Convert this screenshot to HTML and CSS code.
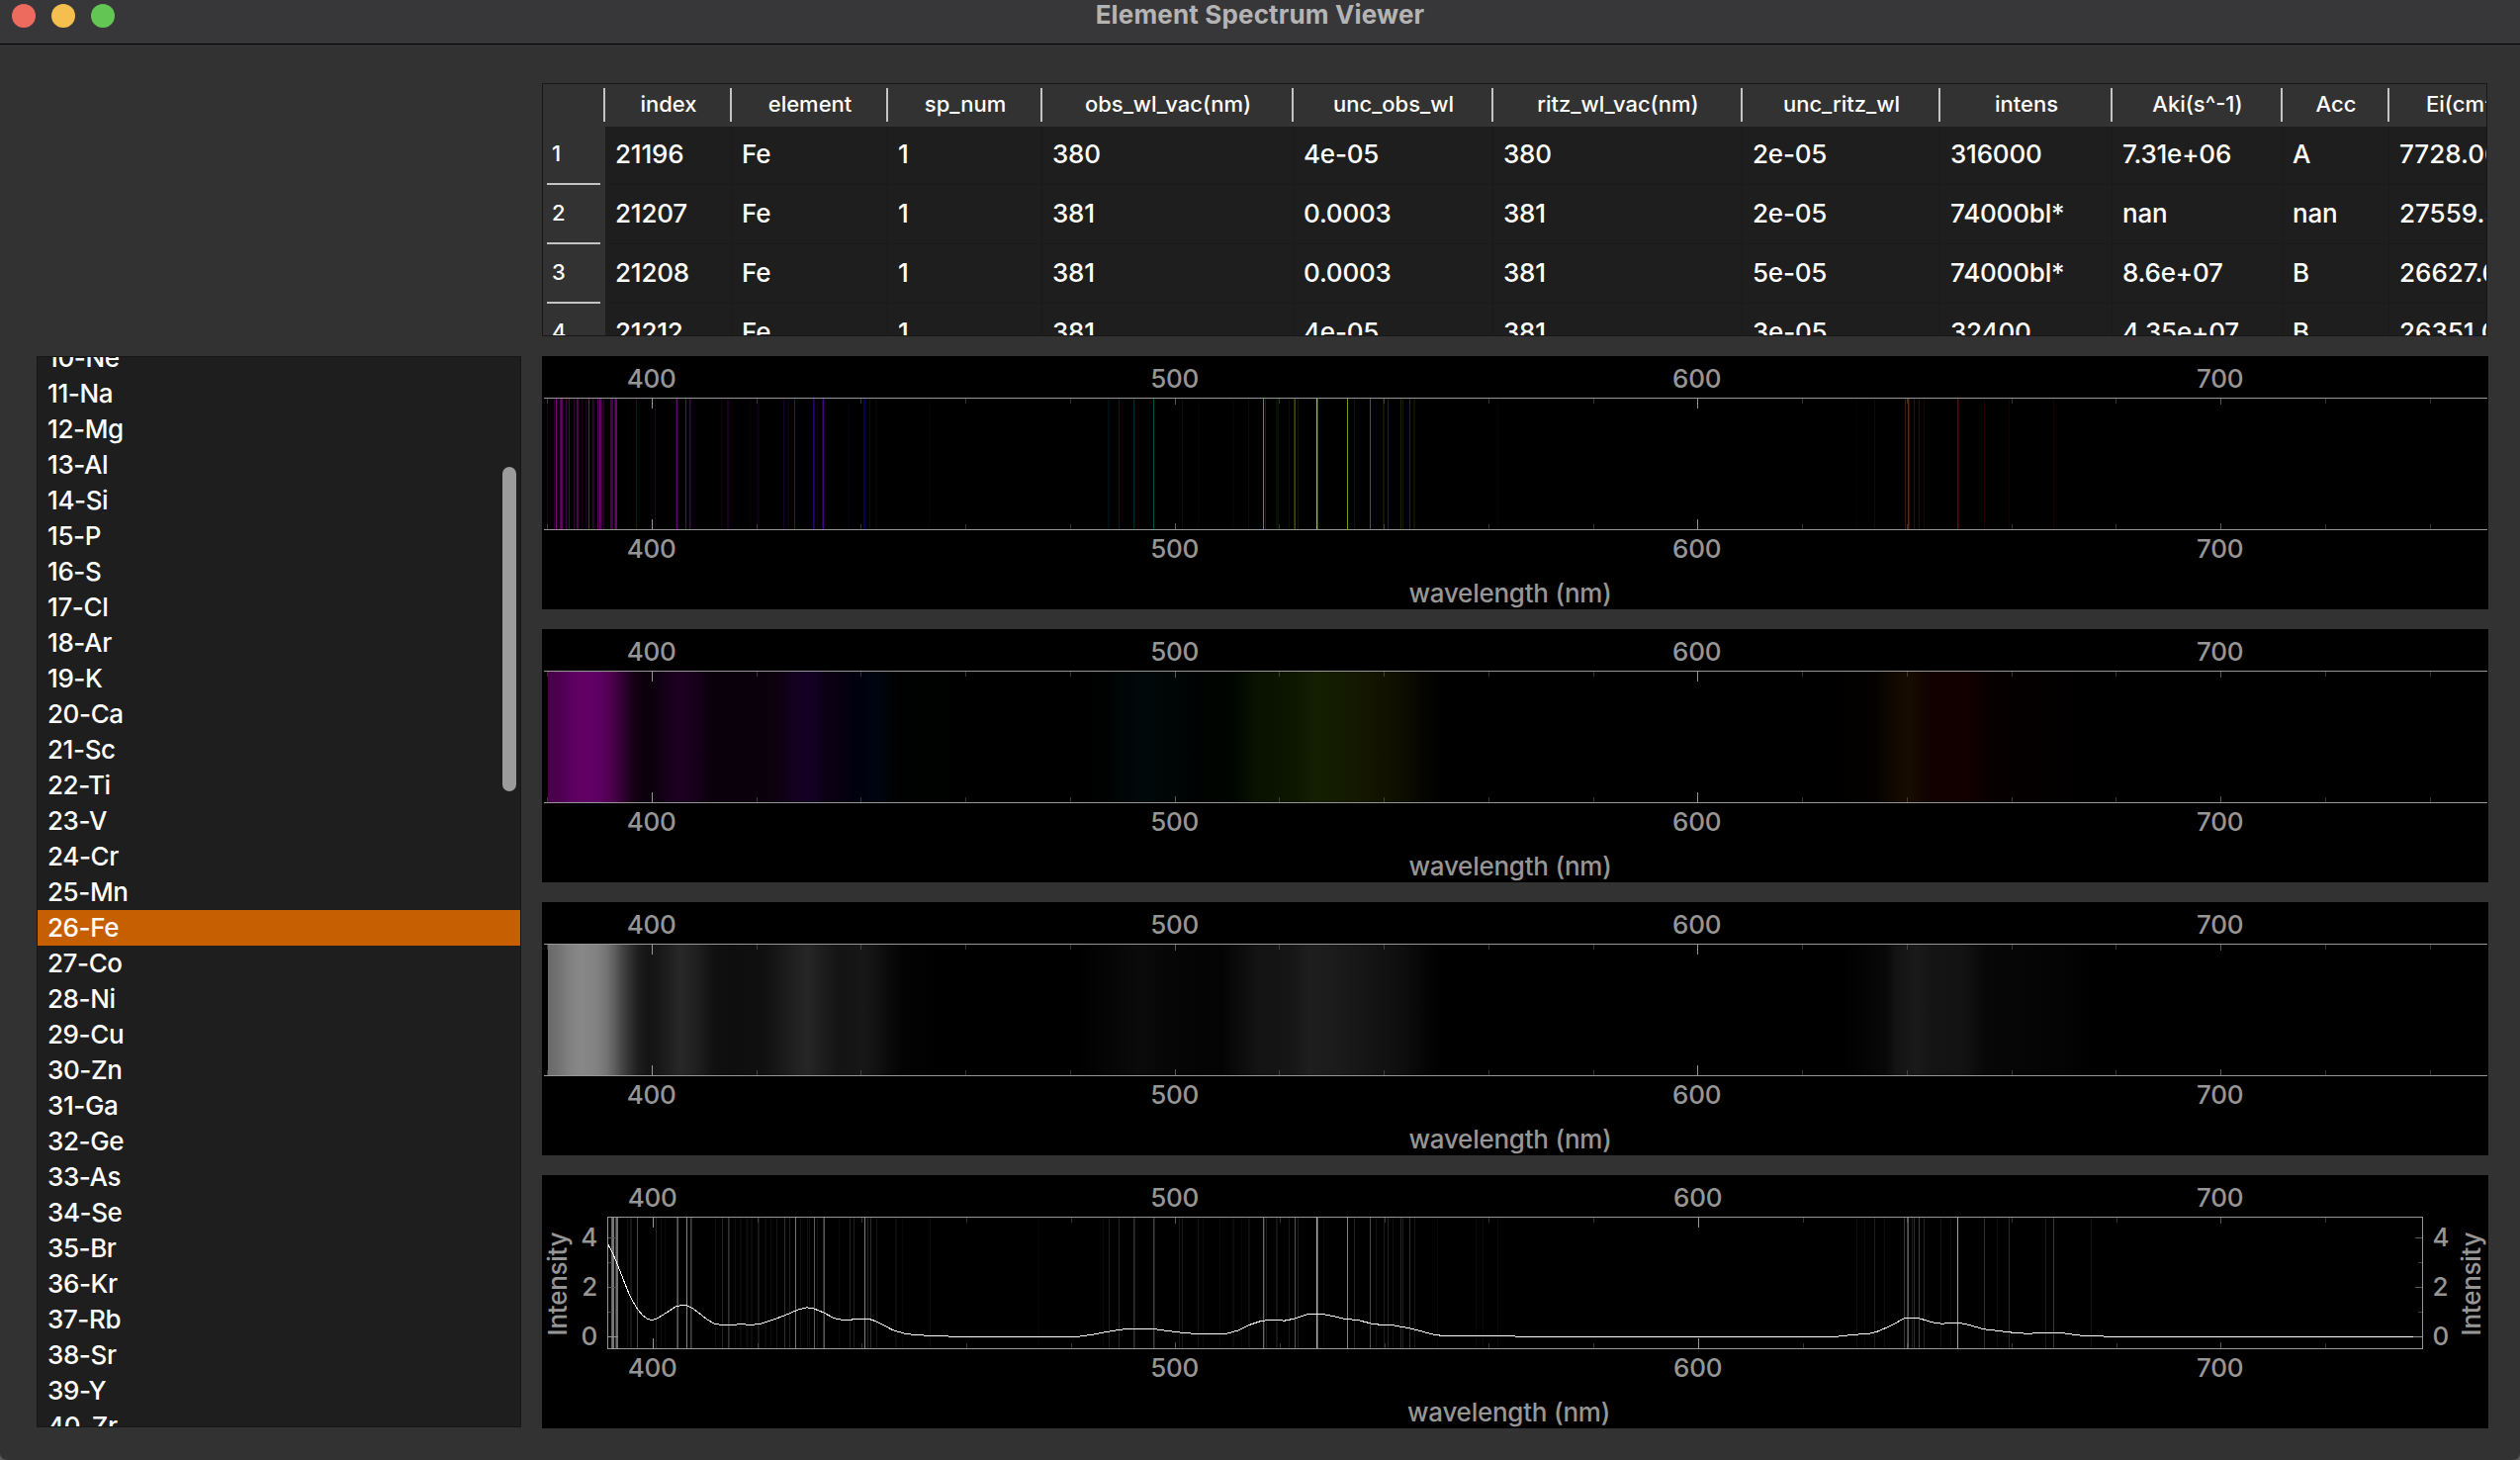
FILE: index.html
```html
<!DOCTYPE html>
<html lang="en">
<head>
<meta charset="utf-8">
<title>Element Spectrum Viewer</title>
<link rel="stylesheet" href="styles.css">
</head>
<body>
<div class="window">
  <header class="titlebar">
    <div class="lights"><i class="light close"></i><i class="light minimize"></i><i class="light zoom"></i></div>
    <h1 class="title">Element Spectrum Viewer</h1>
  </header>
  <main class="content">
    <section class="table">
      <div class="thead">
        <span></span><span>index</span><span>element</span><span>sp_num</span><span>obs_wl_vac(nm)</span><span>unc_obs_wl</span><span>ritz_wl_vac(nm)</span><span>unc_ritz_wl</span><span>intens</span><span>Aki(s^-1)</span><span>Acc</span><span>Ei(cm^-1)</span>
      </div>
      <div class="trow"><b>1</b><span>21196</span><span>Fe</span><span>1</span><span>380</span><span>4e-05</span><span>380</span><span>2e-05</span><span>316000</span><span>7.31e+06</span><span>A</span><span>7728.060</span></div>
      <div class="trow"><b>2</b><span>21207</span><span>Fe</span><span>1</span><span>381</span><span>0.0003</span><span>381</span><span>2e-05</span><span>74000bl*</span><span>nan</span><span>nan</span><span>27559.583</span></div>
      <div class="trow"><b>3</b><span>21208</span><span>Fe</span><span>1</span><span>381</span><span>0.0003</span><span>381</span><span>5e-05</span><span>74000bl*</span><span>8.6e+07</span><span>B</span><span>26627.609</span></div>
      <div class="trow"><b>4</b><span>21212</span><span>Fe</span><span>1</span><span>381</span><span>4e-05</span><span>381</span><span>3e-05</span><span>32400</span><span>4.35e+07</span><span>B</span><span>26351.040</span></div>
    </section>
    <aside class="list">
      <ul>
        <li>10-Ne</li><li>11-Na</li><li>12-Mg</li><li>13-Al</li><li>14-Si</li><li>15-P</li><li>16-S</li><li>17-Cl</li><li>18-Ar</li><li>19-K</li><li>20-Ca</li><li>21-Sc</li><li>22-Ti</li><li>23-V</li><li>24-Cr</li><li>25-Mn</li><li class="selected">26-Fe</li><li>27-Co</li><li>28-Ni</li><li>29-Cu</li><li>30-Zn</li><li>31-Ga</li><li>32-Ge</li><li>33-As</li><li>34-Se</li><li>35-Br</li><li>36-Kr</li><li>37-Rb</li><li>38-Sr</li><li>39-Y</li><li>40-Zr</li>
      </ul>
      <div class="scrollbar"></div>
    </aside>
    <section class="plots">
      <svg class="plot" id="lines" viewBox="548 0 1968 256"></svg>
      <svg class="plot" id="color" viewBox="548 0 1968 256"></svg>
      <svg class="plot" id="gray" viewBox="548 0 1968 256"></svg>
      <svg class="plot" id="intensity" viewBox="548 0 1968 256"></svg>
    </section>
  </main>
</div>
<script src="plots.js"></script>
</body>
</html>
```
FILE: styles.css
```css
* { box-sizing: border-box; }
html, body { margin: 0; height: 100%; }
body {
  background: #5a5a5a;
  color: #fff;
  font-family: Inter, "Liberation Sans", sans-serif;
  font-size: 26px;
  overflow: hidden;
}
.window {
  width: 2548px;
  height: 1476px;
  display: flex;
  flex-direction: column;
  background: #323232;
  border-radius: 0 0 7px 7px;
  overflow: hidden;
}
.titlebar {
  height: 45px;
  flex: none;
  display: grid;
  grid-template-columns: 1fr auto 1fr;
  background: #373739;
  border-bottom: 1px solid #000;
}
.lights { display: flex; gap: 16px; padding: 4px 0 0 12px; }
.light { width: 24px; height: 24px; border-radius: 50%; }
.close { background: #ed6a5e; }
.minimize { background: #f5bf4f; }
.zoom { background: #62c554; }
.title { margin: 0; font-size: 26px; line-height: 30px; font-weight: 700; color: #b4b4b5; letter-spacing: 0.15px; }

.content {
  flex: 1;
  display: grid;
  grid-template-columns: 490px 1968px;
  grid-template-rows: 256px 1084px;
  gap: 20px 21px;
  padding: 39px 32px 32px 37px;
}
.table {
  grid-column: 2;
  width: 1967px;
  background: #1e1e1e;
  border: 1px solid #171717;
  overflow: hidden;
  font-weight: 500;
}
.thead, .trow {
  display: grid;
  width: 2050px;
  grid-template-columns: 63px 128px 158px 156px 254px 202px 252px 200px 174px 172px 108px 183px;
}
.thead {
  height: 43px;
  background: #323232;
  font-size: 22px;
}
.thead span {
  height: 34px;
  margin-top: 4px;
  padding-left: 2px;
  line-height: 33px;
  text-align: center;
  border-right: 2px solid #c4c4c4;
}
.thead span:last-child { text-align: left; padding-left: 37px; }
.trow { height: 60px; line-height: 57px; letter-spacing: -0.2px; }
.trow:nth-child(2) { height: 59px; line-height: 55px; }
.trow span {
  padding-left: 10px;
  border-right: 1px solid #1a1a1a;
  border-bottom: 1px solid #1a1a1a;
}
.trow span:last-child { letter-spacing: 0; }
.trow b {
  background: #323232;
  font-size: 22px;
  font-weight: 500;
  display: flex;
  flex-direction: column;
  justify-content: space-between;
  padding: 0 5px 0 9px;
}
.trow b::after { content: ""; height: 2px; margin-left: -5px; background: #c4c4c4; flex: none; }

.list {
  grid-column: 1;
  position: relative;
  background: #1e1e1e;
  border: 1px solid #161616;
  margin-bottom: 1px;
  overflow: hidden;
}
.list ul { margin: -17px 0 0; padding: 0; list-style: none; font-weight: 500; letter-spacing: -0.4px; }
.list li { height: 36px; line-height: 36px; padding-left: 10px; }
.list .selected { background: #c65f02; }
.scrollbar { position: absolute; right: 4px; top: 111px; width: 14px; height: 328px; border-radius: 7px; background: #9b9b9b; }

.plots { display: flex; flex-direction: column; gap: 20px; }
.plot { width: 1968px; height: 256px; background: #000; display: block; }
.plot text { fill: #969696; font-size: 26px; font-weight: 450; letter-spacing: -0.25px; }
```
FILE: plots.js
```js
const NS = 'http://www.w3.org/2000/svg';
const AXIS = '#969696';

function add(parent, name, attrs, text) {
  const el = document.createElementNS(NS, name);
  for (const key in attrs) el.setAttribute(key, attrs[key]);
  if (text) el.textContent = text;
  parent.appendChild(el);
  return el;
}
function rect(svg, x, y, width, height, fill) {
  add(svg, 'rect', { x, y, width, height, fill, 'shape-rendering': 'crispEdges' });
}

// [x, colour, width]
const COLOR_LINES = [
  [553,'#1c001c'],[556,'#0c000c'],[560,'#2c002c'],[562,'#7a007c'],[566,'#48004a'],[567,'#6c006e'],[568,'#5c005e'],[572,'#3c003e'],[575,'#58005c'],
  [580,'#300032'],[583,'#5a005e'],[584,'#48004a'],[588,'#180018'],[592,'#200020'],[595,'#8e0094'],[599,'#3a003c'],[600,'#240024'],[604,'#580058'],[606,'#70006f'],[607,'#4c004c'],[608,'#380038'],[610,'#220022'],
  [617,'#480048',3],[621,'#3c003c'],[622,'#6a006e',2],[636,'#080008'],[643,'#340036'],[658,'#0a000c'],[662,'#1e0020'],
  [683,'#280030'],[684,'#620074'],[693,'#66007e'],[697,'#48005c'],[698,'#180020'],[729,'#140018'],[735,'#1c0022',2],[758,'#080009',2],[765,'#0c0010',3],
  [792,'#1c002c'],[797,'#0e001c'],[803,'#480084'],[818,'#06000c'],[822,'#340068'],[823,'#200040'],[826,'#08000f'],[831,'#200040'],[832,'#48008e'],
  [858,'#060014'],[862,'#040010'],[873,'#00005e',2],[879,'#001038'],[885,'#000808',2],[939,'#000806'],
  [1120,'#000c0e',2],[1131,'#002224'],[1146,'#002a2c'],[1147,'#000c0e'],[1166,'#005050'],[1192,'#000404'],[1195,'#00120a'],[1211,'#000804'],[1246,'#000600',2],[1262,'#0a1000'],
  [1277,'#5a9608'],[1279,'#162400'],[1290,'#081000',3],[1303,'#0c1000'],[1308,'#202c00'],[1309,'#405400'],[1312,'#101600'],[1331,'#94cc22'],[1332,'#2c4000'],
  [1362,'#749a08'],[1369,'#121600'],[1385,'#525a00'],[1391,'#060600'],[1398,'#141600',2],[1403,'#222600'],[1416,'#202200'],[1418,'#161800'],[1425,'#2c2c00'],[1429,'#101000',2],[1514,'#060600'],
  [1877,'#080300'],[1895,'#160800'],[1926,'#3a1800'],[1929,'#642800'],[1930,'#301200'],[1935,'#300e00'],[1940,'#241000'],[1945,'#1a0800'],
  [1979,'#780000'],[1980,'#380000'],[2006,'#200000'],[2031,'#1c0000'],[2076,'#1e0000']
];
const GRAY_LINES = [
  [618,'#606060'],[619,'#787878',2],[622,'#404040'],[623,'#707070',2],[634,'#0e0e0e'],[637,'#161616',2],[644,'#484848'],[663,'#242424'],[668,'#0e0e0e'],[672,'#0a0a0a'],
  [684,'#3c3c3c'],[685,'#5c5c5c'],[694,'#828282'],[698,'#444444'],[699,'#262626'],[723,'#101010'],[730,'#242424'],[736,'#323232'],[737,'#202020'],[743,'#0a0a0a'],[748,'#0a0a0a',2],[754,'#0a0a0a',3],[759,'#0c0c0c',2],[766,'#181818',2],
  [773,'#0a0a0a',2],[779,'#0c0c0c'],[785,'#161616'],[793,'#303030'],[798,'#1e1e1e'],[804,'#787878'],[809,'#121212'],[816,'#121212'],[818,'#101010'],[823,'#5c5c5c'],[826,'#101010'],[832,'#303030'],[833,'#585858'],
  [848,'#0a0a0a'],[859,'#222222'],[863,'#1c1c1c'],[874,'#7c7c7c'],[877,'#222222'],[880,'#2c2c2c'],[886,'#161616'],[905,'#0c0c0c',2],[912,'#080808'],[940,'#0c0c0c'],[1050,'#060606'],
  [1115,'#080808'],[1121,'#1c1c1c'],[1131,'#262626'],[1146,'#303030'],[1147,'#1c1c1c'],[1166,'#404040'],[1167,'#202020'],[1192,'#141414'],[1195,'#181818'],[1211,'#141414'],[1216,'#0a0a0a'],[1233,'#080808'],[1246,'#0a0a0a',2],[1255,'#080808'],[1262,'#0e0e0e',2],
  [1277,'#6c6c6c'],[1278,'#242424'],[1280,'#1a1a1a'],[1290,'#141414',2],[1303,'#181818'],[1309,'#525252'],[1312,'#1c1c1c'],[1331,'#b0b0b0'],[1332,'#505050'],[1338,'#0a0a0a'],[1362,'#848484'],[1369,'#242424'],
  [1385,'#4c4c4c'],[1391,'#101010'],[1399,'#1a1a1a'],[1403,'#222222'],[1408,'#0e0e0e'],[1416,'#282828'],[1418,'#1c1c1c'],[1425,'#303030'],[1430,'#161616'],[1453,'#080808'],[1492,'#080808'],[1499,'#080808'],[1514,'#0a0a0a'],
  [1877,'#0e0e0e'],[1885,'#0a0a0a'],[1895,'#1c1c1c'],[1905,'#0e0e0e'],[1925,'#383838'],[1928,'#404040'],[1929,'#5a5a5a'],[1933,'#1c1c1c'],[1935,'#2e2e2e'],[1940,'#404040'],[1945,'#242424'],[1962,'#121212'],[1972,'#0a0a0a'],
  [1979,'#a0a0a0'],[2006,'#303030'],[2019,'#0e0e0e'],[2031,'#2a2a2a'],[2068,'#1c1c1c'],[2076,'#383838'],[2114,'#121212']
];

// [x, colour]
const COLOR_STOPS = [
  [554,'#4a004a'],[565,'#4c004e'],[577,'#5a0060'],[588,'#620064'],[603,'#600064'],[613,'#560058'],[622,'#440044'],[630,'#320032'],[640,'#180018'],[648,'#0c000c'],[659,'#0c000c'],[668,'#120014'],[680,'#1a001e'],[693,'#1c0020'],[707,'#140018'],[720,'#0a000c'],[773,'#0a000c'],[787,'#0e0012'],[803,'#140020'],[823,'#140024'],[833,'#0c0014'],[850,'#06000f'],[867,'#00000f'],[885,'#000410'],[895,'#000408'],[907,'#000202'],[940,'#000200'],[973,'#000000'],
  [1096,'#000000'],[1124,'#000303'],[1152,'#000809'],[1180,'#000606'],[1208,'#000202'],[1247,'#000500'],[1268,'#081200'],[1307,'#0c1600'],[1328,'#141e00'],[1363,'#141a00'],[1391,'#121400'],[1419,'#0e0e00'],[1443,'#040400'],[1460,'#000000'],
  [1847,'#000000'],[1896,'#040200'],[1913,'#100800'],[1931,'#180c00'],[1945,'#120400'],[1952,'#120000'],[1994,'#120000'],[2008,'#080000'],[2043,'#040000'],[2092,'#020000'],[2120,'#000000'],[2515,'#000000']
];
const GRAY_STOPS = [
  [554,'#6a6a6a'],[563,'#707070'],[575,'#808080'],[587,'#888888'],[603,'#828282'],[613,'#747474'],[622,'#5c5c5c'],[628,'#484848'],[637,'#303030'],[645,'#1e1e1e'],[655,'#141414'],[665,'#171717'],[677,'#202020'],[688,'#282828'],[700,'#222222'],[713,'#181818'],[722,'#101010'],[740,'#0e0e0e'],[773,'#101010'],[787,'#171717'],[803,'#202020'],[817,'#262626'],[830,'#1e1e1e'],[847,'#141414'],[860,'#151515'],[873,'#171717'],[887,'#111111'],[900,'#090909'],[913,'#030303'],[940,'#010101'],[960,'#000000'],
  [1089,'#000000'],[1124,'#060606'],[1152,'#0a0a0a'],[1194,'#050505'],[1236,'#030303'],[1250,'#0a0a0a'],[1271,'#131313'],[1307,'#161616'],[1324,'#1e1e1e'],[1349,'#1b1b1b'],[1391,'#131313'],[1419,'#0e0e0e'],[1443,'#040404'],[1460,'#000000'],
  [1864,'#000000'],[1906,'#080808'],[1917,'#131313'],[1938,'#1a1a1a'],[1952,'#141414'],[1987,'#121212'],[2008,'#070707'],[2092,'#030303'],[2120,'#000000'],[2515,'#000000']
];

// Smoothed intensity curve, x and y in plot pixels
const CURVE = '615,70.5 620,80 625,92 630,105 636,120 640,128 645,136 650,142 655,145.5 659,146.5 664,145 670,141.5 677,137 683,133 689,131.5 695,132 700,134.5 707,139.5 715,146 722,150 729,151.5 742,151.5 748,150.5 759,151.5 770,150 778,147.5 793,142 807,136 816,133.8 823,135 833,139 843,144.5 852,146.5 861,146.2 863,145.5 879,145.5 885,147.5 893,151.5 903,156.8 915,160.2 923,161.3 940,162.4 965,163.2 1089,163.4 1103,161.5 1120,158.3 1138,155.5 1166,155.5 1177,157 1193,159 1208,160.4 1240,160.4 1252,157 1263,151.5 1275,147.5 1285,146.3 1295,146.3 1298,147.3 1308,145.3 1322,140.7 1338,140.7 1348,142.6 1360,145.4 1373,146.6 1388,150.4 1397,151.4 1410,152 1423,154.4 1437,157.7 1447,160.7 1458,162.4 1531,162.4 1533,163.4 1855,163.4 1872,161.6 1891,160 1900,157.6 1914,151 1925,145 1939,144.3 1953,148.7 1964,150.3 1970,149.4 1981,149.4 1991,151.4 2005,155.6 2019,157.3 2036,159.3 2053,160.5 2057,159.5 2084,159.5 2103,162 2134,163.3 2440,163.4';

function label(svg, x, y, text, anchor) {
  add(svg, 'text', { x, y, 'text-anchor': anchor || 'middle' }, text);
}

function axes(svg, x400, scale, max, center) {
  for (let nm = 380; nm <= max; nm += 20) {
    const x = Math.floor(x400 + (nm - 400) * scale);
    if (x < 550 || (scale < 5.287 && nm < 400)) continue;
    const big = nm === 400 || nm === 600;
    const mid = nm === 500 || nm === 700;
    const len = big ? 10 : mid ? 6 : 5;
    const fill = big ? '#969696' : mid ? '#585858' : 'rgba(150,150,150,.35)';
    rect(svg, x, 43, 1, len, fill);
    rect(svg, x, 175 - len, 1, len, fill);
    if (big || mid) {
      label(svg, x - 0.3, 32, nm);
      label(svg, x - 0.3, 204, nm);
    }
  }
  label(svg, center, 249, 'wavelength (nm)');
}

function bands(svg, stops) {
  const first = stops[0][0], last = stops[stops.length - 1][0];
  const id = svg.id + '-fill';
  const g = add(svg, 'linearGradient', { id });
  for (const [x, c] of stops) add(g, 'stop', { offset: (x - first) / (last - first), 'stop-color': c });
  rect(svg, first, 43, last - first, 132, `url(#${id})`);
}

function spectrumLines(svg, lines) {
  for (const [x, c, w] of lines) rect(svg, x, 43, w || 1, 132, c);
}

const lines = document.getElementById('lines');
const color = document.getElementById('color');
const gray = document.getElementById('gray');
const intensity = document.getElementById('intensity');

spectrumLines(lines, COLOR_LINES);
bands(color, COLOR_STOPS);
bands(gray, GRAY_STOPS);
for (const svg of [lines, color, gray]) {
  axes(svg, 659.3, 5.2875, 740, 1527);
  rect(svg, 550, 42, 1965, 1, AXIS);
  rect(svg, 550, 175, 1965, 1, AXIS);
}

spectrumLines(intensity, GRAY_LINES);
axes(intensity, 660.3, 5.285, 720, 1525.5);
for (const [value, y] of [[4, 63], [3, 88], [2, 113], [1, 138], [0, 163]]) {
  const len = value === 0 ? 10 : value % 2 ? 4 : 7;
  const fill = value === 0 ? '#969696' : value % 2 ? '#404040' : '#585858';
  rect(intensity, 615, y, len, 1, fill);
  rect(intensity, 2449 - len, y, len, 1, fill);
  if (value % 2 === 0) {
    label(intensity, 604, y + 9, String(value), 'end');
    label(intensity, 2459.5, y + 9, String(value), 'start');
  }
}
add(intensity, 'polyline', { points: CURVE, fill: 'none', stroke: '#fff', 'stroke-width': 1, 'shape-rendering': 'crispEdges' });
rect(intensity, 614, 42, 1836, 1, AXIS);
rect(intensity, 614, 175, 1836, 1, AXIS);
rect(intensity, 614, 42, 1, 134, AXIS);
rect(intensity, 2449, 42, 1, 134, AXIS);
for (const x of [573, 2508]) {
  add(intensity, 'text', { transform: `translate(${x} 110) rotate(-90)`, 'text-anchor': 'middle' }, 'Intensity');
}
```
